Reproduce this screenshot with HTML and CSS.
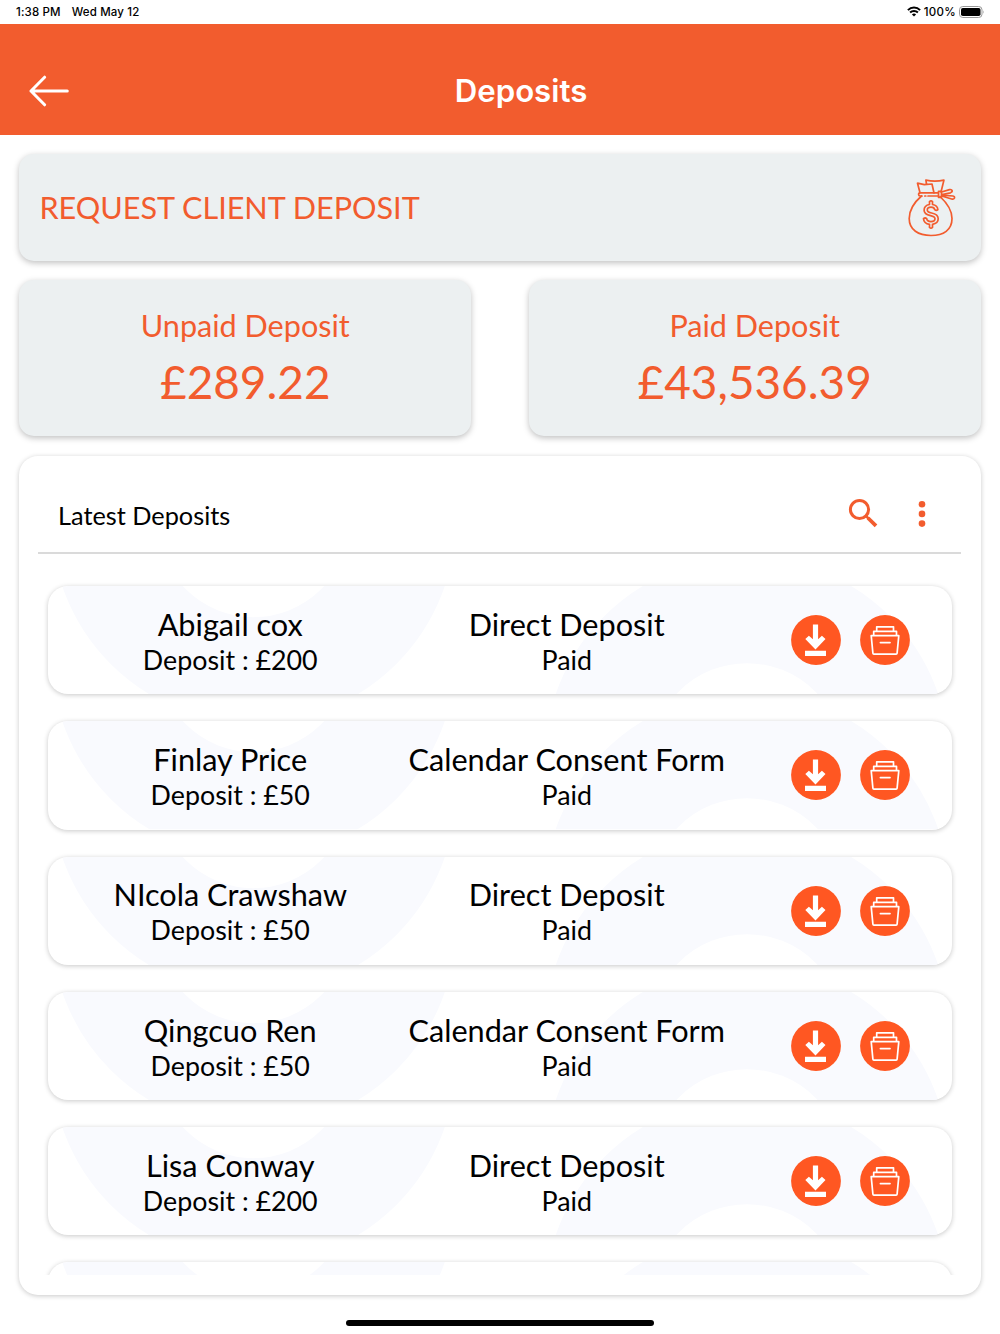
FILE: index.html
```html
<!DOCTYPE html>
<html lang="en">

<head>
  <meta charset="UTF-8">
  <title>Deposits</title>
  <link rel="stylesheet" href="styles.css">
</head>

<body>
  <!-- shared icons -->
  <svg class="sprite" width="0" height="0">
    <symbol id="rings" viewBox="0 0 904 108">
      <circle cx="205.5" cy="-65" r="149" />
      <circle cx="699" cy="173" r="149" />
    </symbol>
    <symbol id="download" viewBox="0 0 50 50">
      <circle cx="25" cy="25" r="24.9" fill="#ff5722" />
      <path fill="#fff" d="M21.9 9.5h5.2v14.8l3.8-3.6 3.6 3.4-10 10.4-10.2-10.4 3.6-3.4 4 3.6zM14 35.7h21v5.2H14z" />
    </symbol>
    <symbol id="archive" viewBox="0 0 50 50">
      <circle cx="25" cy="25" r="24.9" fill="#ff5722" />
      <path fill="none" stroke="#fff" stroke-width="1.7" stroke-linejoin="round" stroke-linecap="round"
        d="M11.2 20.7h27.6l-1.7 17.4q-.1 1-1 1H13.9q-.9 0-1-1zM13.7 20.3v-4h22.8v4M16.7 16v-4.2h16.8V16M20.4 27.6h9.6" />
    </symbol>
  </svg>

  <div class="status-bar">
    <span class="time">1:38 PM</span>
    <span class="date">Wed May 12</span>
    <div class="battery">
      <svg width="14" height="11" viewBox="0 0 14 11" fill="none" stroke="#000" stroke-width="2">
        <path d="M.9 4.1a8.7 8.7 0 0 1 12.2 0M3.1 6.5a5.6 5.6 0 0 1 7.8 0" />
        <path d="M7 10.6L4.9 8.5a3 3 0 0 1 4.2 0z" fill="#000" stroke="none" />
      </svg>
      <span>100%</span>
      <svg width="26" height="12" viewBox="0 0 26 12">
        <rect x=".5" y=".5" width="22.5" height="11" rx="3.3" fill="#fff" stroke="#999" />
        <rect x="2" y="2" width="19.5" height="8" rx="1.8" />
        <path d="M24.3 4.2q1.4 1.8 0 3.6z" fill="#999" />
      </svg>
    </div>
  </div>

  <header>
    <svg class="back" width="40" height="32" viewBox="0 0 40 32">
      <path d="M38.3 16H2M15.6 2.2L2 16l13.6 13.8" />
    </svg>
    <h1>Deposits</h1>
  </header>

  <main>
    <div class="card request">
      <span>REQUEST CLIENT DEPOSIT</span>
      <svg width="48" height="58" viewBox="0 0 48 58">
        <path d="M13.5 17C6 23.5 1.2 32 1.2 39.5 1.2 51 10.5 56.5 23 56.5S44 51 44 39.5C44 32 38.5 23.5 32 17.5" />
        <path d="M12 13.8L9.5 4.2l6.8 1.5L24 5l2 9M18.5 5L17.9 1.2q9 1.8 18 0L33 13" />
        <path d="M14 17h-1.8q-1.6 0-1.6-1.6T12.2 13.8H30M16.8 17h1M20 17h10" />
        <path d="M30.5 12.3h3v6h-3zM33.5 13l8-2.4q2.2-.4 2.6 1t-1.6 2.2l-8.5 1.7M34 16.2l11 .8q2 .5 1.4 2.2-.7 1.4-2.8.8l-9.8-3" />
        <path d="M21.5 22.5q1.5-1.4 3 0v3c3.2.6 5.2 2.6 5.4 5.2q-1.5 1.5-3.2 0c-.3-1.6-1.6-2.5-3.7-2.5s-3.7 1-3.7 2.8c0 2 1.6 2.5 4.3 3 3.7.7 6.6 2 6.6 5.8 0 3-2.2 5-5.7 5.5v3.2q-1.5 1.4-3 0v-3.2c-3.7-.5-5.8-2.5-6-5.6q1.6-1.4 3.2 0c.2 1.8 1.7 2.9 4.3 2.9 2.4 0 4-1 4-2.8 0-2-1.5-2.6-4.5-3.2-3.6-.7-6.4-1.8-6.4-5.4 0-2.9 2-5.1 5.4-5.7z" />
      </svg>
    </div>

    <div class="totals">
      <div class="card total">
        <h2>Unpaid Deposit</h2>
        <p>£289.22</p>
      </div>
      <div class="card total">
        <h2>Paid Deposit</h2>
        <p>£43,536.39</p>
      </div>
    </div>

    <section class="latest">
      <div class="latest-header">
        <h3>Latest Deposits</h3>
        <svg class="search" width="30" height="30" viewBox="0 0 30 30">
          <circle cx="11.5" cy="11.5" r="9.1" />
          <path d="M18 18l2.5 2.5" stroke-width="2.5" />
          <path d="M20 20l8 7.8" stroke-width="3.8" />
        </svg>
        <svg class="more" width="8" height="28" viewBox="0 0 8 28">
          <circle cx="4" cy="4.2" r="3.3" />
          <circle cx="4" cy="13.9" r="3.3" />
          <circle cx="4" cy="23.6" r="3.3" />
        </svg>
      </div>

      <div class="list">
        <div class="row">
          <svg class="rings"><use href="#rings" /></svg>
          <div class="info">
            <h4>Abigail cox</h4>
            <p>Deposit : £200</p>
          </div>
          <div class="info">
            <h4>Direct Deposit</h4>
            <p>Paid</p>
          </div>
          <div class="actions">
            <svg><use href="#download" /></svg>
            <svg><use href="#archive" /></svg>
          </div>
        </div>
        <div class="row">
          <svg class="rings"><use href="#rings" /></svg>
          <div class="info">
            <h4>Finlay Price</h4>
            <p>Deposit : £50</p>
          </div>
          <div class="info">
            <h4>Calendar Consent Form</h4>
            <p>Paid</p>
          </div>
          <div class="actions">
            <svg><use href="#download" /></svg>
            <svg><use href="#archive" /></svg>
          </div>
        </div>
        <div class="row">
          <svg class="rings"><use href="#rings" /></svg>
          <div class="info">
            <h4>NIcola Crawshaw</h4>
            <p>Deposit : £50</p>
          </div>
          <div class="info">
            <h4>Direct Deposit</h4>
            <p>Paid</p>
          </div>
          <div class="actions">
            <svg><use href="#download" /></svg>
            <svg><use href="#archive" /></svg>
          </div>
        </div>
        <div class="row">
          <svg class="rings"><use href="#rings" /></svg>
          <div class="info">
            <h4>Qingcuo Ren</h4>
            <p>Deposit : £50</p>
          </div>
          <div class="info">
            <h4>Calendar Consent Form</h4>
            <p>Paid</p>
          </div>
          <div class="actions">
            <svg><use href="#download" /></svg>
            <svg><use href="#archive" /></svg>
          </div>
        </div>
        <div class="row">
          <svg class="rings"><use href="#rings" /></svg>
          <div class="info">
            <h4>Lisa Conway</h4>
            <p>Deposit : £200</p>
          </div>
          <div class="info">
            <h4>Direct Deposit</h4>
            <p>Paid</p>
          </div>
          <div class="actions">
            <svg><use href="#download" /></svg>
            <svg><use href="#archive" /></svg>
          </div>
        </div>
        <div class="row">
          <svg class="rings"><use href="#rings" /></svg>
        </div>
      </div>
    </section>
  </main>

  <div class="home-bar"></div>
</body>

</html>
```
FILE: styles.css
```css
* {
  box-sizing: border-box;
}

body {
  margin: 0;
  height: 1334px;
  overflow: hidden;
  background: #fff;
  color: #000;
  font-family: Lato, sans-serif;
}

h1,
h2,
h3,
h4,
p {
  margin: 0;
  font-weight: 400;
}

svg {
  display: block;
  flex: none;
}

.sprite {
  position: absolute;
}

.status-bar {
  display: flex;
  align-items: center;
  height: 23.5px;
  padding: 0 15px 0 16px;
  font-family: Inter, sans-serif;
  font-size: 11.5px;
  font-weight: 500;
  letter-spacing: 0.15px;
}

.date {
  margin-left: 11px;
}

.battery {
  display: flex;
  align-items: center;
  gap: 3px;
  margin-left: auto;
}

.battery span {
  letter-spacing: 0.3px;
}

header {
  display: flex;
  align-items: center;
  height: 111px;
  padding: 24px 0 0 29px;
  background: #f25c2e;
}

.back {
  fill: none;
  stroke: #fff;
  stroke-width: 3;
  stroke-linecap: round;
  stroke-linejoin: round;
}

header h1 {
  flex: 1;
  padding-right: 27px;
  color: #fff;
  font-family: Inter, sans-serif;
  font-size: 31.2px;
  font-weight: 600;
  text-align: center;
}

main {
  padding: 19px 19.4px 0;
}

.card {
  background: #ecf0f1;
  color: #f25c2e;
  border-radius: 15px;
  box-shadow: 0 2px 6px rgba(0, 0, 0, 0.25);
}

.request {
  display: flex;
  align-items: center;
  justify-content: space-between;
  height: 107px;
  padding: 1px 24.6px 0 20px;
  font-size: 30.6px;
}

.request svg {
  fill: none;
  stroke: #f25c2e;
  stroke-width: 1.7;
  stroke-linejoin: round;
  stroke-linecap: round;
}

.totals {
  display: flex;
  justify-content: space-between;
  margin-top: 19px;
}

.total {
  width: 451.8px;
  height: 156.5px;
  padding-top: 27px;
  text-align: center;
}

.total h2 {
  font-size: 30.6px;
  line-height: 38px;
}

.total p {
  font-size: 45.9px;
  line-height: 56px;
  margin-top: 9px;
}

.latest {
  height: 839px;
  margin-top: 20px;
  padding: 0 19.9px 0 19px;
  border-radius: 19px;
  background: #fff;
  box-shadow: 0 1px 5px rgba(0, 0, 0, 0.22);
}

.latest-header {
  display: flex;
  align-items: center;
  height: 98px;
  padding: 20px 35px 0 19.6px;
  border-bottom: 2px solid #dadada;
}

.latest h3 {
  flex: 1;
  padding-top: 1px;
  font-size: 25.3px;
}

.search {
  margin: -2px 40px 0 0;
  fill: none;
  stroke: #f25c2e;
  stroke-width: 3;
}

.more {
  fill: #f25c2e;
}

.list {
  display: flex;
  flex-direction: column;
  gap: 27px;
  height: 721px;
  padding: 32px 8.7px 0 9.6px;
  overflow: hidden;
}

.row {
  position: relative;
  display: flex;
  align-items: center;
  flex: none;
  height: 108.25px;
  padding-left: 14px;
  border-radius: 20px;
  background: #fff;
  box-shadow: 0 1px 5px rgba(0, 0, 0, 0.22);
}

.rings {
  position: absolute;
  top: 0;
  left: 0;
  width: 904px;
  height: 108.25px;
  border-radius: 20px;
  fill: none;
  stroke: #f9fafe;
  stroke-width: 106;
}

.info {
  position: relative;
  width: 336.5px;
  padding-top: 1.6px;
  text-align: center;
}

.info h4 {
  font-size: 30.65px;
  line-height: 38px;
}

.info p {
  font-size: 26.8px;
  line-height: 32px;
}

.actions {
  position: relative;
  display: flex;
  gap: 19.4px;
  margin-left: 55.6px;
}

.actions svg {
  width: 50px;
  height: 50px;
}

.home-bar {
  width: 308px;
  height: 6px;
  margin: 25px auto 0;
  border-radius: 3px;
  background: #000;
}
```
